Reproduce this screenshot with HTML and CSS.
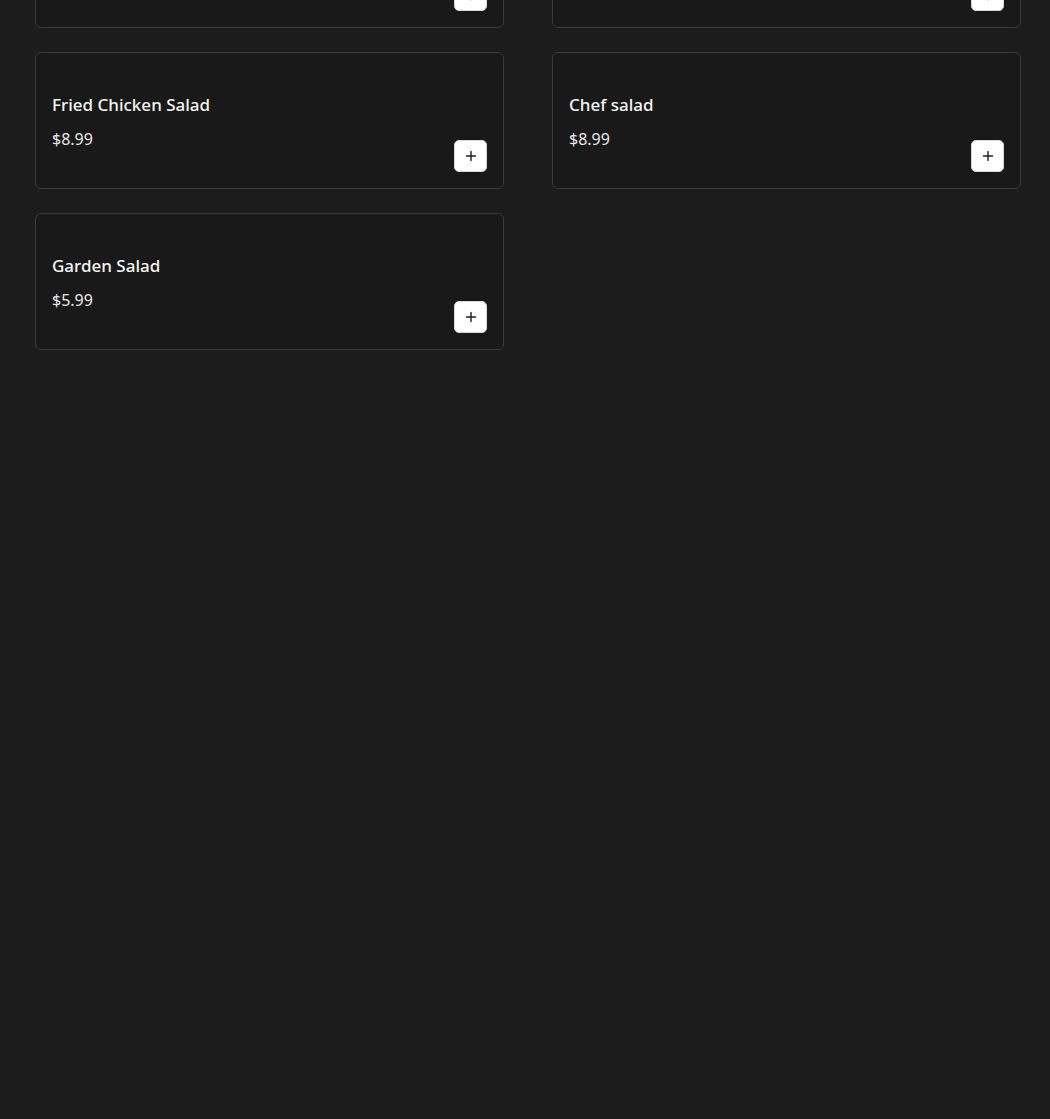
FILE: index.html
```html
<!DOCTYPE html>
<html lang="en">
<head>
<meta charset="utf-8">
<title>Menu</title>
<link rel="stylesheet" href="styles.css">
</head>
<body>
<main class="menu">
  <div class="grid">
    <article class="card">
      <div class="info"><h3 class="name">Caesar Salad</h3><p class="price">$7.99</p></div>
      <button class="add" aria-label="Add"><svg viewBox="0 0 12 12" width="12" height="12"><path d="M6 1.5v9M1.5 6h9" stroke="#1c1c1c" stroke-width="1.4" stroke-linecap="round"/></svg></button>
    </article>
    <article class="card">
      <div class="info"><h3 class="name">Greek Salad</h3><p class="price">$7.99</p></div>
      <button class="add" aria-label="Add"><svg viewBox="0 0 12 12" width="12" height="12"><path d="M6 1.5v9M1.5 6h9" stroke="#1c1c1c" stroke-width="1.4" stroke-linecap="round"/></svg></button>
    </article>
    <article class="card">
      <div class="info"><h3 class="name">Fried Chicken Salad</h3><p class="price">$8.99</p></div>
      <button class="add" aria-label="Add"><svg viewBox="0 0 12 12" width="12" height="12"><path d="M6 1.5v9M1.5 6h9" stroke="#1c1c1c" stroke-width="1.4" stroke-linecap="round"/></svg></button>
    </article>
    <article class="card">
      <div class="info"><h3 class="name">Chef salad</h3><p class="price">$8.99</p></div>
      <button class="add" aria-label="Add"><svg viewBox="0 0 12 12" width="12" height="12"><path d="M6 1.5v9M1.5 6h9" stroke="#1c1c1c" stroke-width="1.4" stroke-linecap="round"/></svg></button>
    </article>
    <article class="card">
      <div class="info"><h3 class="name">Garden Salad</h3><p class="price">$5.99</p></div>
      <button class="add" aria-label="Add"><svg viewBox="0 0 12 12" width="12" height="12"><path d="M6 1.5v9M1.5 6h9" stroke="#1c1c1c" stroke-width="1.4" stroke-linecap="round"/></svg></button>
    </article>
  </div>
</main>
</body>
</html>
```

FILE: styles.css
```css
html, body {
  margin: 0;
  padding: 0;
  background: #1c1c1c;
  overflow: hidden;
}
body {
  font-family: "Noto Sans", "Open Sans", sans-serif;
  color: #f2f2f2;
  min-height: 1119px;
}
.menu {
  padding: 0 29px 0 35px;
}
.grid {
  margin-top: -109px;
  display: grid;
  grid-template-columns: 469px 469px;
  column-gap: 48px;
  row-gap: 24px;
}
.card {
  box-sizing: border-box;
  height: 137px;
  background: #191919;
  border: 1px solid #3b3b3b;
  border-radius: 6px;
  padding: 40px 16px 16px 16px;
  display: flex;
  justify-content: space-between;
  align-items: flex-end;
}
.info {
  align-self: flex-start;
}
.name {
  margin: 0;
  font-size: 17px;
  line-height: 24px;
  font-weight: 500;
  color: #f5f5f5;
}
.price {
  margin: 10px 0 0 0;
  font-size: 16px;
  line-height: 24px;
  font-weight: 400;
  color: #e8e8e8;
}
.add {
  width: 33px;
  height: 32px;
  padding: 0;
  border: 1px solid #d8d8d8;
  border-radius: 5px;
  background: #ffffff;
  display: flex;
  align-items: center;
  justify-content: center;
  cursor: pointer;
}
```
